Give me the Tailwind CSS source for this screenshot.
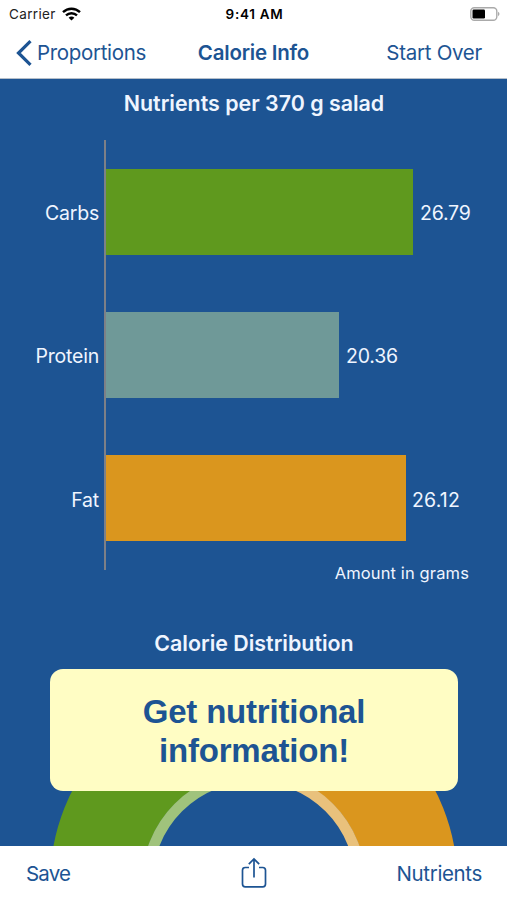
<!DOCTYPE html>
<html lang="en">
<head>
<meta charset="utf-8">
<meta name="viewport" content="width=device-width, initial-scale=1">
<title>Calorie Info</title>
<script src="https://cdn.jsdelivr.net/npm/@tailwindcss/browser@4"></script>
</head>
<body class="w-[507px] h-[900px] overflow-hidden bg-white font-[Inter,sans-serif] text-[#1d5493]">
<div class="flex flex-col h-[900px]">
  <header class="h-[79px] shrink-0 border-b border-[#b5bfca]">
    <div class="grid grid-cols-3 items-center h-[27px] pl-[9px] pr-[7px] text-[13.5px] text-[#222]">
      <div class="flex items-center gap-[6px]">
        <span class="pt-[1px] tracking-[0.35px]">Carrier</span>
        <svg class="w-[19px] h-[14px]" viewBox="0 0 19 14" fill="none" stroke="#000" stroke-width="2.4"><path d="M1 5.200C5.800.6 13.200.6 18 5.200M4 8.400C7.100 5.500 11.900 5.500 15 8.400"/><path d="M9.500 13.600L6.600 10.700C8.200 9.200 10.800 9.200 12.400 10.700Z" fill="#000" stroke="none"/></svg>
      </div>
      <span class="pt-[1px] text-center font-semibold text-black tracking-[0.7px]">9:41 AM</span>
      <svg class="w-[31px] h-[14px] justify-self-end" viewBox="0 0 31 14"><rect x="1.800" y=".8" width="26" height="12.400" rx="3.500" fill="#fff" stroke="#aaa" stroke-width="1.400"/><rect x="3.500" y="2.500" width="12.500" height="9" rx="1.200"/><path d="M29 4.800Q32 7 29 9.200Z" fill="#aaa"/></svg>
    </div>
    <nav class="grid grid-cols-3 items-center h-[51px] pl-[16px] pr-[25px] text-[20.5px]">
      <div class="flex items-center gap-[5px]">
        <svg class="w-[16px] h-[26px] shrink-0" viewBox="0 0 16 26" fill="none" stroke="currentColor" stroke-width="3.200"><path d="M14.500 1.200L2.500 13L14.500 24.800"/></svg>
        <span class="pt-[2px] tracking-[-0.32px]">Proportions</span>
      </div>
      <h1 class="justify-self-center pl-[9px] pt-[2px] font-semibold whitespace-nowrap tracking-[-0.22px]">Calorie Info</h1>
      <span class="justify-self-end pt-[2px] tracking-[-0.28px]">Start Over</span>
    </nav>
  </header>

  <main class="relative h-[767px] shrink-0 overflow-hidden bg-[#1d5493] text-[#eff5ff]">
    <h2 class="h-[61px] pt-[10px] pl-[1px] text-center text-[21.400px] leading-[29px] font-semibold"><span>Nutrients per 370 g salad</span></h2>
    <section class="flex h-[430px] text-[19.500px]">
      <div class="grid grid-rows-3 items-center w-[104px] h-[430px] pr-[5px] text-right tracking-[-0.2px]">
        <span class="pt-[4px]">Carbs</span><span class="pt-[4px]">Protein</span><span class="pt-[4px]">Fat</span>
      </div>
      <div class="w-[2px] bg-[#7d8087]"></div>
      <div class="grid grid-rows-3 items-center">
        <div class="flex items-center gap-[7px]"><div class="w-[307px] h-[86px] bg-[#5f991e]"></div><span class="pt-[4px] tracking-[-0.200px]">26.79</span></div>
        <div class="flex items-center gap-[7px]"><div class="w-[233px] h-[86px] bg-[#6f9998]"></div><span class="pt-[4px] tracking-[-0.200px]">20.36</span></div>
        <div class="flex items-center gap-[6px]"><div class="w-[300px] h-[86px] bg-[#da961e]"></div><span class="pt-[4px] tracking-[0.200px]">26.12</span></div>
      </div>
    </section>
    <p class="h-[58px] pr-[38px] text-right text-[16.500px] leading-[6px] tracking-[0.130px]"><span>Amount in grams</span></p>
    <h2 class="h-[41px] pl-[1px] text-center text-[21.400px] leading-[31px] font-semibold"><span>Calorie Distribution</span></h2>
    <svg class="block w-[507px] h-[177px]" viewBox="0 0 507 177" fill="none">
      <g transform="translate(253.800 214)">
        <path d="M-157.700 0A157.700 157.700 0 0 1 0-157.700" stroke="#5f991e" stroke-width="92"/>
        <path d="M0-157.700A157.700 157.700 0 0 1 157.700 0" stroke="#da961e" stroke-width="92"/>
        <path d="M-106.700 0A106.700 106.700 0 0 1 0-106.700" stroke="#a0c37c" stroke-width="10.600"/>
        <path d="M0-106.700A106.700 106.700 0 0 1 106.700 0" stroke="#e9c17c" stroke-width="10.600"/>
      </g>
    </svg>
    <div class="absolute left-[50px] top-[590px] flex flex-col items-center justify-center w-[408px] h-[122px] pt-[2px] rounded-[13px] bg-[#fffdc4] text-[#1d5493] font-['Liberation_Sans',sans-serif] text-[33px] leading-[39px] font-bold tracking-[-0.200px]">
      <span>Get nutritional</span><span>information!</span>
    </div>
  </main>

  <footer class="grid grid-cols-3 items-center h-[54px] pl-[26px] pr-[25px] text-[20.500px]">
    <span class="pt-[3px] tracking-[-0.800px]">Save</span>
    <svg class="justify-self-center w-[26px] h-[32px]" viewBox="0 0 26 32" fill="none" stroke="currentColor" stroke-width="1.700"><path d="M8 10.500H4.300Q1.500 10.500 1.500 13.300V27Q1.500 29.800 4.300 29.800H21.700Q24.500 29.800 24.500 27V13.300Q24.500 10.500 21.700 10.500H18M13 20.500V2M7.800 7.200L13 2L18.200 7.200"/></svg>
    <span class="pt-[3px] justify-self-end tracking-[-0.350px]">Nutrients</span>
  </footer>
</div>
</body>
</html>
